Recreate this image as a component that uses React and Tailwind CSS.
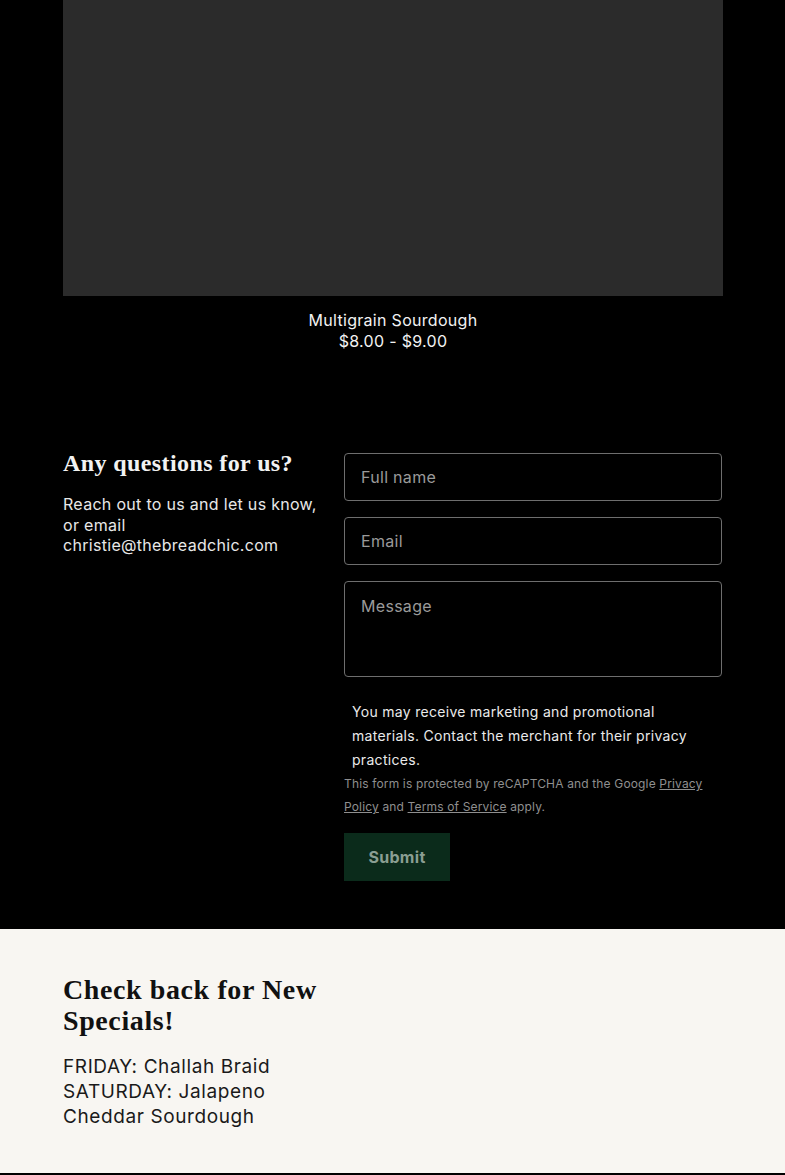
export default function App() {
  const sans = { fontFamily: 'Inter, "Open Sans", sans-serif' };
  const serif = { fontFamily: '"Liberation Serif", "DejaVu Serif", serif' };
  return (
    <div className="w-[785px] bg-black" style={sans}>
      <section className="bg-black pl-[63px] pr-[62px] pb-[52px]">
        <div className="h-[296px] w-full bg-[#2b2b2b]" />
        <div className="mt-[14px] flex flex-col items-center text-[16px] leading-[21px] tracking-[0.3px] text-[#f2f2f2]">
          <div>Multigrain Sourdough</div>
          <div>$8.00 - $9.00</div>
        </div>
      </section>
      <section className="flex gap-[21px] bg-black px-[63px] pt-[49px] pb-[48px]">
        <div className="w-[260px] shrink-0">
          <h2 className="mt-[-2px] text-[24px] font-bold leading-[24px] tracking-[0.4px] text-[#f2f2f2]" style={serif}>Any questions for us?</h2>
          <p className="mt-[19px] text-[16px] leading-[20.5px] tracking-[0.3px] text-[#e8e8e8]">
            Reach out to us and let us know, or email christie@thebreadchic.com
          </p>
        </div>
        <form className="flex w-[378px] flex-col" onSubmit={(e) => e.preventDefault()}>
          <input placeholder="Full name" className="h-[48px] rounded-[4px] border border-[#6e6e6e] bg-black px-[16px] text-[16px] tracking-[0.3px] text-white outline-none placeholder:text-[#9a9a9a]" />
          <input placeholder="Email" className="mt-[16px] h-[48px] rounded-[4px] border border-[#6e6e6e] bg-black px-[16px] text-[16px] tracking-[0.3px] text-white outline-none placeholder:text-[#9a9a9a]" />
          <textarea placeholder="Message" className="mt-[16px] h-[96px] resize-none rounded-[4px] border border-[#6e6e6e] bg-black px-[16px] py-[13px] text-[16px] leading-[22px] tracking-[0.3px] text-white outline-none placeholder:text-[#9a9a9a]" />
          <p className="mt-[23px] px-[8px] text-[14px] leading-[24px] tracking-[0.3px] text-[#eaeaea]">
            You may receive marketing and promotional materials. Contact the merchant for their privacy practices.
          </p>
          <p className="text-[12px] leading-[23px] tracking-[0.15px] text-[#8f8f8f]">
            This form is protected by reCAPTCHA and the Google <span className="underline">Privacy Policy</span> and <span className="underline">Terms of Service</span> apply.
          </p>
          <div className="mt-[15px]">
            <button type="button" className="h-[48px] w-[106px] bg-[#0b2b1b] text-[16px] font-bold tracking-[0.3px] text-[#8a9e92]">Submit</button>
          </div>
        </form>
      </section>
      <section className="bg-[#f8f6f2] px-[63px] pt-[45px] pb-[44px]">
        <div className="w-[300px]">
          <h2 className="text-[28px] font-bold leading-[31px] tracking-[0.6px] text-[#111]" style={serif}>Check back for New Specials!</h2>
          <p className="mt-[18px] text-[19px] leading-[25px] tracking-[0.6px] text-[#1a1a1a]">
            FRIDAY: Challah Braid<br />SATURDAY: Jalapeno<br />Cheddar Sourdough
          </p>
        </div>
      </section>
      <div className="h-[3px] bg-black" />
    </div>
  );
}
